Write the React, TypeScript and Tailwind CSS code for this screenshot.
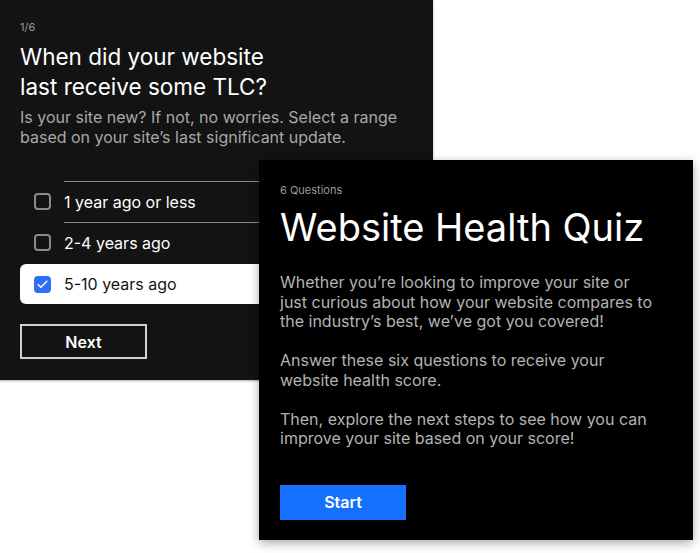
import { Check } from "lucide-react";

const OPTIONS = [
  { label: "1 year ago or less", checked: false },
  { label: "2-4 years ago", checked: false },
  { label: "5-10 years ago", checked: true },
];

function Option({ label, checked }: { label: string; checked: boolean }) {
  if (checked) {
    return (
      <div className="mt-[1px] flex h-[40px] items-center rounded-[6px] bg-white pl-[14px]">
        <span className="flex h-[17px] w-[17px] items-center justify-center rounded-[4px] bg-[#2f6ff3]">
          <Check className="h-[13px] w-[13px] text-white" strokeWidth={2.5} />
        </span>
        <span className="ml-[13px] text-[16px] text-[#141414]">{label}</span>
      </div>
    );
  }
  return (
    <div className="flex h-[41px] items-center pl-[14px]">
      <span className="h-[17px] w-[17px] rounded-[4px] border-2 border-[#8a8a8a]" />
      <div className="ml-[13px] flex h-full flex-1 items-center border-t border-[#8a8a8a] text-[16px] text-white">
        {label}
      </div>
    </div>
  );
}

export default function App() {
  return (
    <div
      className="relative h-[553px] w-[700px] overflow-hidden bg-white"
      style={{ fontFamily: "Inter, 'Liberation Sans', sans-serif" }}
    >
      <div className="h-[380px] w-[433px] bg-[#131313] px-[20px] pt-[20px] shadow-[0_1px_2px_rgba(0,0,0,0.35)]">
        <p className="text-[11px] leading-[14px] text-[#9a9a9a]">1/6</p>
        <h2 className="mt-[8px] text-[22.5px] leading-[30px] text-white">
          When did your website
          <br />
          last receive some TLC?
        </h2>
        <p className="mt-[6px] text-[16px] leading-[19.5px] text-[#a8a8a8]">
          Is your site new? If not, no worries. Select a range based on your site’s last significant update.
        </p>
        <div className="mt-[34px]">
          {OPTIONS.map((o) => (
            <Option key={o.label} label={o.label} checked={o.checked} />
          ))}
        </div>
        <button className="mt-[20px] h-[35px] w-[127px] border-2 border-[#d0d0d0] text-[16px] font-semibold text-white">
          Next
        </button>
      </div>

      <div className="absolute left-[259px] top-[160px] h-[380px] w-[434px] bg-black px-[21px] pt-[23px] shadow-[0_3px_10px_rgba(0,0,0,0.35)]">
        <p className="text-[11px] leading-[14px] text-[#9a9a9a]">6 Questions</p>
        <h1 className="mt-[8px] text-[38px] leading-[44px] text-white">Website Health Quiz</h1>
        <div className="mt-[24px] max-w-[380px] space-y-[19.5px] text-[16px] leading-[19.5px] text-[#b3b3b3]">
          <p>
            Whether you’re looking to improve your site or just curious about how your website compares to the
            industry’s best, we’ve got you covered!
          </p>
          <p>Answer these six questions to receive your website health score.</p>
          <p>Then, explore the next steps to see how you can improve your site based on your score!</p>
        </div>
        <button className="mt-[36px] h-[35px] w-[126px] bg-[#1570ff] text-[16px] font-semibold text-white">
          Start
        </button>
      </div>
    </div>
  );
}
